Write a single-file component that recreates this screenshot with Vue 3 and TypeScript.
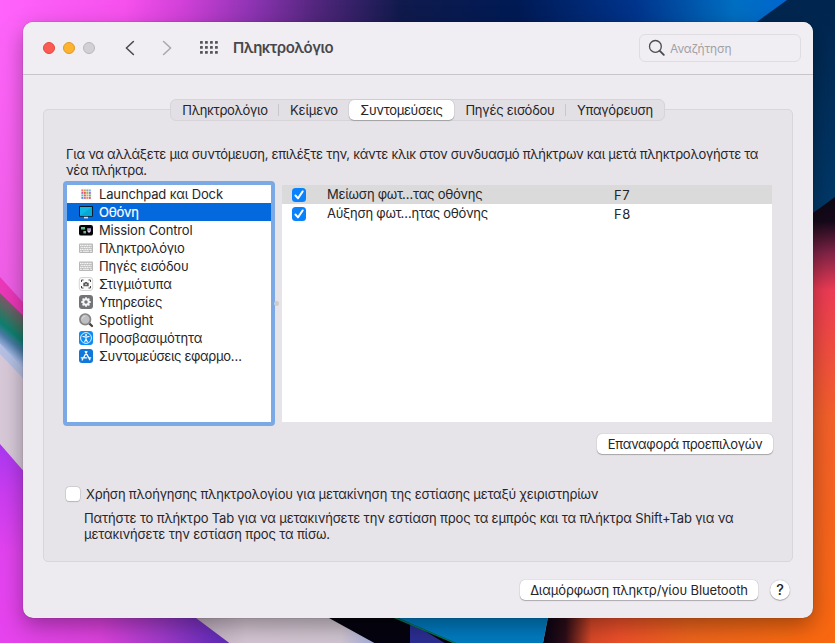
<script setup lang="ts">
import { ref } from 'vue'

interface Tab { label: string; cls: string }
interface Category { label: string; icon: string; cls: string }
interface Shortcut { label: string; key: string; enabled: boolean; cls: string }

const tabs: Tab[] = [
  { label: 'Πληκτρολόγιο', cls: 'tab-keyboard' },
  { label: 'Κείμενο', cls: 'tab-text' },
  { label: 'Συντομεύσεις', cls: 'tab-shortcuts' },
  { label: 'Πηγές εισόδου', cls: 'tab-sources' },
  { label: 'Υπαγόρευση', cls: 'tab-dictation' },
]
const activeTab = ref(2)

const categories: Category[] = [
  { label: 'Launchpad και Dock', icon: 'launchpad', cls: 'k15' },
  { label: 'Οθόνη', icon: 'display', cls: 'k23' },
  { label: 'Mission Control', icon: 'mission', cls: 'k15' },
  { label: 'Πληκτρολόγιο', icon: 'keyboard', cls: 'k30' },
  { label: 'Πηγές εισόδου', icon: 'keyboard', cls: 'k20' },
  { label: 'Στιγμιότυπα', icon: 'screenshot', cls: 'k15' },
  { label: 'Υπηρεσίες', icon: 'gear', cls: 'k23' },
  { label: 'Spotlight', icon: 'spotlight', cls: 'k00' },
  { label: 'Προσβασιμότητα', icon: 'access', cls: 'k17' },
  { label: 'Συντομεύσεις εφαρμο…', icon: 'appstore', cls: 'k35' },
]
const selected = ref(1)

const shortcuts = ref<Shortcut[]>([
  { label: 'Μείωση φωτ…τας οθόνης', key: 'F7', enabled: true, cls: 'k23' },
  { label: 'Αύξηση φωτ…ητας οθόνης', key: 'F8', enabled: true, cls: 'k27' },
])
const fullAccess = ref(false)

const padColors = ['#e8756a', '#e79a4c', '#9b9b9b', '#6fb8e8', '#dd5a9c', '#e0604c', '#8bc34a', '#9c6fd6', '#4fc3c8', '#ef5350', '#f2a33c', '#58b368', '#5c8fe0', '#bd70c8', '#ef8a50', '#e05a6a']
const gearAngles = [0, 45, 90, 135, 180, 225, 270, 315]
</script>

<template>
  <div class="desktop">
    <svg class="wallpaper" viewBox="0 0 835 643" preserveAspectRatio="none" aria-hidden="true">
      <defs>
        <linearGradient id="top" x1="0" x2="1" y1="0" y2="0">
          <stop offset="0" stop-color="#ff63fb" />
          <stop offset=".15" stop-color="#f650ed" />
          <stop offset=".22" stop-color="#d040d8" />
          <stop offset=".3" stop-color="#8f34b4" />
          <stop offset=".38" stop-color="#51267c" />
          <stop offset=".48" stop-color="#101a4c" />
          <stop offset=".62" stop-color="#001a55" />
          <stop offset=".76" stop-color="#00348c" />
          <stop offset=".88" stop-color="#006fc2" />
          <stop offset=".95" stop-color="#0065d0" />
        </linearGradient>
        <linearGradient id="left" x1="0" x2="0" y1="0" y2="643" gradientUnits="userSpaceOnUse">
          <stop offset="0" stop-color="#ff63fb" />
          <stop offset=".45" stop-color="#ef5fe6" />
          <stop offset=".69" stop-color="#a838f0" />
          <stop offset=".76" stop-color="#c83cf0" />
          <stop offset=".86" stop-color="#e243ee" />
          <stop offset="1" stop-color="#e643ee" />
        </linearGradient>
        <linearGradient id="bottom" x1="0" x2="1" y1="0" y2="0">
          <stop offset="0" stop-color="#e643ee" />
          <stop offset=".4" stop-color="#dc41dc" />
          <stop offset=".65" stop-color="#a03aca" />
          <stop offset=".85" stop-color="#6a2dbc" />
          <stop offset="1" stop-color="#5428a8" />
        </linearGradient>
        <linearGradient id="right" x1="0" x2="0" y1="190" y2="643" gradientUnits="userSpaceOnUse">
          <stop offset="0" stop-color="#090812" />
          <stop offset=".07" stop-color="#16091a" />
          <stop offset=".14" stop-color="#822447" />
          <stop offset=".22" stop-color="#ed3b55" />
          <stop offset=".33" stop-color="#f04a43" />
          <stop offset=".5" stop-color="#f3602a" />
          <stop offset="1" stop-color="#f9680f" />
        </linearGradient>
        <linearGradient id="ember" x1="545" x2="835" y1="0" y2="0" gradientUnits="userSpaceOnUse">
          <stop offset="0" stop-color="#090414" />
          <stop offset=".07" stop-color="#2c0d18" />
          <stop offset=".16" stop-color="#d84828" />
          <stop offset=".25" stop-color="#ec4f2a" />
          <stop offset=".5" stop-color="#ee641c" />
          <stop offset="1" stop-color="#fb6b0c" />
        </linearGradient>
        <linearGradient id="navy" x1="0" x2="0" y1="0" y2="1">
          <stop offset="0" stop-color="#00254e" />
          <stop offset="1" stop-color="#003e70" />
        </linearGradient>
        <linearGradient id="silver" x1="0" x2="1" y1="0" y2="0">
          <stop offset="0" stop-color="#b9a7b8" />
          <stop offset=".3" stop-color="#d5c5d3" />
          <stop offset=".8" stop-color="#d0c5d1" />
          <stop offset="1" stop-color="#9aa8db" />
        </linearGradient>
        <linearGradient id="band" x1="0" y1="293" x2="-26" y2="324" gradientUnits="userSpaceOnUse">
          <stop offset="0" stop-color="#85556d" />
          <stop offset=".3" stop-color="#427061" />
          <stop offset=".55" stop-color="#0d806e" />
          <stop offset=".75" stop-color="#4a7ba6" />
          <stop offset="1" stop-color="#a4b9e6" />
        </linearGradient>
      </defs>
      <rect width="835" height="330" fill="url(#top)" />
      <rect width="200" height="620" y="23" fill="url(#left)" />
      <rect y="606" width="250" height="37" fill="url(#bottom)" />
      <path d="M0 277L30 310V340L0 305Z" fill="#ea38b9" />
      <path d="M0 293L40 332V390L0 346Z" fill="url(#band)" />
      <path d="M0 344L40 386V490L0 444Z" fill="#d8c9d9" />
      <path d="M0 344L40 386V396L0 354Z" fill="#b5c0e3" />
      <path d="M188 612L232 645H380L318 612Z" fill="url(#silver)" />
      <path d="M318 612L378 645H470L392 612Z" fill="#05030f" />
      <path d="M410 622L448 645H410Z" fill="#2b2e91" />
      <path d="M384 612L456 643H543L549 612Z" fill="#007bc0" />
      <path d="M384 613L457 644" stroke="#087650" stroke-width="1.500" />
      <path d="M549 612L543 643H835V500H700V612Z" fill="url(#ember)" />
      <rect x="790" y="190" width="45" height="453" fill="url(#right)" />
      <path d="M787 0L740 34V266L835 197V0Z" fill="url(#navy)" />
    </svg>

    <main class="window">
      <header class="toolbar">
        <div class="lights">
          <i class="light red"></i><i class="light amber"></i><i class="light grey"></i>
        </div>
        <svg class="chev" width="12" height="18" viewBox="0 0 12 18"><path d="M9.400 2.500L2.400 9l7 6.500" /></svg>
        <svg class="chev next" width="12" height="18" viewBox="0 0 12 18"><path d="M2.600 2.500L9.600 9l-7 6.500" /></svg>
        <svg class="grid" width="18" height="14" viewBox="0 0 18 14">
          <template v-for="r in 3" :key="r">
            <rect v-for="c in 4" :key="c" :x="(c - 1) * 5" :y="(r - 1) * 5" width="2.8" height="2.8" rx=".6" />
          </template>
        </svg>
        <h1>Πληκτρολόγιο</h1>
        <div class="search">
          <svg width="18" height="18" viewBox="0 0 18 18"><circle cx="7.4" cy="7.4" r="5.9" /><path d="M11.8 11.8l4 4" stroke-width="1.9" /></svg>
          <span>Αναζήτηση</span>
        </div>
      </header>

      <div class="content">
        <nav class="tabs">
          <button v-for="(t, i) in tabs" :key="t.label" :class="['tab', t.cls, { on: i === activeTab }]" @click="activeTab = i">{{ t.label }}</button>
        </nav>

        <section class="panel">
          <p class="intro"><span class="k28">Για να αλλάξετε μια συντόμευση, επιλέξτε την, κάντε κλικ στον συνδυασμό πλήκτρων και μετά πληκτρολογήστε τα</span><br><span class="k28">νέα πλήκτρα.</span></p>

          <div class="split">
            <ul class="cats">
              <li v-for="(c, i) in categories" :key="c.label" :class="{ sel: i === selected }" @click="selected = i">
                <svg width="16" height="16" viewBox="0 0 16 16">
                  <g v-if="c.icon === 'launchpad'">
                    <rect x="2.5" y="2.5" width="11" height="11" rx="2" fill="#f6f4f6" />
                    <rect v-for="(p, n) in padColors" :key="n" :x="3.4 + (n % 4) * 2.5" :y="3.5 + Math.floor(n / 4) * 2.5" width="1.9" height="1.9" :fill="p" />
                  </g>
                  <g v-else-if="c.icon === 'display'">
                    <rect x="6" y="12" width="4" height="2.4" fill="#e5dfd3" />
                    <rect x="1" y="2" width="14" height="10.8" rx=".8" fill="#061b29" />
                    <rect x="2" y="3" width="12" height="8.8" fill="#10b9e3" />
                    <path d="M2 11.8L14 3v8.8z" fill="#08a9d9" />
                  </g>
                  <g v-else-if="c.icon === 'mission'">
                    <rect x="1" y="3" width="14" height="10.6" rx="2.2" fill="#050607" />
                    <path d="M3 5h4v2.5H3z" fill="#5cc78c" /><path d="M5.4 9h2.6v2.4H5.4z" fill="#75b8a2" />
                    <path d="M9.2 6.2h3.8v3.5H9.2z" fill="#a99bc0" /><path d="M10 9h2v1.6h-2z" fill="#ddd" />
                  </g>
                  <g v-else-if="c.icon === 'keyboard'">
                    <rect x="1" y="3.400" width="14" height="9.600" rx="1" fill="#b8b8b8" />
                    <path d="M2 5.300h12M2.600 7.300h11M2 9.300h12" stroke="#f8f8f8" stroke-width="1.200" stroke-dasharray="1.200 .5" />
                    <path d="M2 11.300h2M4.800 11.300h6.400M12 11.300h2" stroke="#f8f8f8" stroke-width="1.100" />
                  </g>
                  <g v-else-if="c.icon === 'screenshot'">
                    <rect x="1.3" y="1.5" width="13.4" height="13" rx="2.6" fill="#fbfbfb" stroke="#cbcbcb" stroke-width=".8" />
                    <path d="M3.500 6V4h2M10.500 4h2v2M12.500 10v2h-2M5.500 12h-2v-2" fill="none" stroke="#333" stroke-width=".9" />
                    <path d="M5.300 6.700h1.300l.5-.8h1.800l.5.8h1.300v3.500H5.300z" fill="#5a5a5a" /><circle cx="8" cy="8.400" r=".9" fill="#ccc" />
                  </g>
                  <g v-else-if="c.icon === 'gear'">
                    <rect x="1" y="1" width="14" height="14" rx="3" fill="#737478" />
                    <rect v-for="a in gearAngles" :key="a" x="7.1" y="3.2" width="1.8" height="2.4" rx=".4" fill="#f5f5f5" :transform="`rotate(${a} 8 8)`" />
                    <circle cx="8" cy="8" r="2.700" fill="none" stroke="#f5f5f5" stroke-width="1.9" />
                  </g>
                  <g v-else-if="c.icon === 'spotlight'">
                    <path d="M11.200 11.400L14 14" stroke="#444" stroke-width="2.300" stroke-linecap="round" />
                    <circle cx="7.200" cy="7.300" r="5.300" fill="#bfbfc1" stroke="#858587" stroke-width="1.700" />
                    <path d="M4.200 6.800a3.200 3.200 0 0 1 3-2.700" fill="none" stroke="#ddd" />
                  </g>
                  <g v-else-if="c.icon === 'access'">
                    <rect x="1" y="1" width="14" height="14" rx="3" fill="#0b8cf6" />
                    <circle cx="8" cy="8" r="5.400" fill="none" stroke="#fff" stroke-width=".9" />
                    <circle cx="8" cy="4.900" r="1" fill="#fff" />
                    <path d="M4.900 6.600l3.100.5 3.100-.5M8 7v2.200M6.700 11.700L8 8.900l1.300 2.800" fill="none" stroke="#fff" stroke-width="1.050" stroke-linecap="round" />
                  </g>
                  <g v-else>
                    <rect x="1" y="1" width="14" height="14" rx="3" fill="#0f78da" />
                    <path d="M8.900 3.700L5.900 9M4.700 11.100l-.5.9M7.300 3.700l4.500 8M3.300 9.800h5.300M10.700 9.800h2" fill="none" stroke="#fff" stroke-width="1.350" stroke-linecap="round" />
                  </g>
                </svg>
                <span :class="c.cls">{{ c.label }}</span>
              </li>
            </ul>
            <div class="divider"><i></i></div>
            <div class="table">
              <div v-for="s in shortcuts" :key="s.key" class="row">
                <button class="check" :class="{ checked: s.enabled }" @click="s.enabled = !s.enabled">
                  <svg v-if="s.enabled" width="14" height="14" viewBox="0 0 14 14"><path d="M3.400 7.500l2.600 2.900 4.700-7" /></svg>
                </button>
                <span class="name" :class="s.cls">{{ s.label }}</span>
                <span class="key">{{ s.key }}</span>
              </div>
            </div>
          </div>

          <div class="actions"><button class="push restore">Επαναφορά προεπιλογών</button></div>

          <div class="option">
            <button class="check" @click="fullAccess = !fullAccess"></button>
            <span class="k21">Χρήση πλοήγησης πληκτρολογίου για μετακίνηση της εστίασης μεταξύ χειριστηρίων</span>
          </div>
          <p class="hint"><span class="k16">Πατήστε το πλήκτρο Tab για να μετακινήσετε την εστίαση προς τα εμπρός και τα πλήκτρα Shift+Tab για να</span><br><span class="k15">μετακινήσετε την εστίαση προς τα πίσω.</span></p>
        </section>

        <footer class="footer">
          <button class="push bluetooth">Διαμόρφωση πληκτρ/γίου Bluetooth</button>
          <button class="help">?</button>
        </footer>
      </div>
    </main>
  </div>
</template>

<style>
body { overflow: hidden; }
</style>

<style scoped>
* { box-sizing: border-box; }
button { font: inherit; color: inherit; letter-spacing: inherit; border: 0; padding: 0; }
.desktop { position: relative; width: 835px; height: 643px; padding: 22px 22px 25px 23px; overflow: hidden; font: 13px/16px Inter, "Liberation Sans", sans-serif; color: #262528; }
.wallpaper { position: absolute; inset: 0; width: 100%; height: 100%; }
.window { position: relative; height: 596px; border-radius: 10px; background: #edebf0; box-shadow: 0 0 1px rgba(0, 0, 0, .5), 0 8px 22px rgba(0, 0, 0, .34); }
.toolbar { display: flex; align-items: center; height: 53px; padding: 0 12px 0 20px; background: #f0eef3; border-bottom: 1px solid #c7c5ca; border-radius: 10px 10px 0 0; }
.lights { display: flex; gap: 8px; margin-right: 29px; }
.light { width: 12px; height: 12px; border-radius: 50%; border: 1px solid; }
.red { background: #fc5b53; border-color: #e0493f; }
.amber { background: #fdb32e; border-color: #e0982a; }
.grey { background: #d2d0d4; border-color: #bab8bd; }
.chev { fill: none; stroke: #4b4a4e; stroke-width: 1.6; stroke-linecap: round; stroke-linejoin: round; margin-right: 25px; }
.chev.next { stroke: #aaa8ad; margin-right: 27px; }
.grid { fill: #555458; margin-right: 15px; }
h1 { margin: 0; font-size: 15px; line-height: 20px; font-weight: 600; letter-spacing: -.52px; color: #48474b; }
.search { display: flex; align-items: center; gap: 4px; width: 162px; height: 28px; margin-left: auto; padding-left: 8px; border: 1px solid #dfdde2; border-radius: 6px; font-size: 12px; letter-spacing: -.2px; color: #a3a1a6; }
.search svg { fill: none; stroke: #4c4b4f; stroke-width: 1.3; stroke-linecap: round; }
.search span { padding-top: 1px; }
.content { padding: 24px 20px 0; display: flex; flex-direction: column; }
.tabs { position: relative; z-index: 1; display: flex; align-self: center; width: 495px; height: 22px; margin: 0 1px -12px 0; background: #e2e0e4; border: 1px solid #d6d4d9; border-radius: 6px; }
.tab { position: relative; height: 20px; padding-bottom: 1px; background: transparent; white-space: nowrap; }
.tab.on { background: #fff; border-radius: 5px; box-shadow: 0 0 1px rgba(0, 0, 0, .35), 0 1px 1px rgba(0, 0, 0, .22); }
.tab-keyboard { width: 108px; letter-spacing: -.34px; }
.tab-text { width: 70px; letter-spacing: -.15px; }
.tab-shortcuts { width: 105px; letter-spacing: -.34px; }
.tab-sources { width: 112px; letter-spacing: -.22px; }
.tab-dictation { width: 98px; letter-spacing: -.3px; }
.tab-keyboard::after, .tab-sources::after { content: ""; position: absolute; right: 0; top: 4px; width: 1px; height: 12px; background: #c9c7cc; }
.panel { height: 453px; padding: 36px 19px 0 22px; border: 1px solid #d8d6da; border-radius: 5px; background: #e6e4e8; white-space: nowrap; }
.intro { margin: 0; height: 35px; }
.split { display: flex; height: 245px; }
.cats { width: 212px; margin: 0 0 0 -3px; padding: 0; border: 4px solid #7ba9e6; border-radius: 4px; background: #fff; list-style: none; }
.cats li { display: flex; align-items: center; gap: 5px; height: 18px; padding-left: 11px; }
.cats li span { margin-top: -1px; }
.cats li.sel { background: #0469dc; color: #fff; -webkit-text-stroke: .2px #fff; }
.cats svg { flex: none; }
.divider { display: flex; align-items: center; width: 7px; }
.divider i { width: 5px; height: 5px; margin-left: -1px; border-radius: 50%; background: #ceccd1; }
.table { width: 490px; margin: 4px 0; background: #fff; }
.row { display: flex; align-items: center; height: 19px; padding-left: 10px; }
.row:first-child { background: #dadadb; }
.name { width: 287px; margin: -2px 0 0 21px; }
.key { letter-spacing: .5px; }
.check { display: flex; flex: none; width: 14px; height: 14px; border-radius: 3.5px; background: #fff; box-shadow: 0 0 0 .5px #bebcc1, 0 .5px 1px rgba(0, 0, 0, .22); }
.check.checked { margin-top: 1px; background: #0a82fb; box-shadow: none; }
.check svg { fill: none; stroke: #fff; stroke-width: 1.9; stroke-linecap: round; stroke-linejoin: round; }
.actions { display: flex; justify-content: flex-end; padding-top: 8px; }
.push { height: 20px; border-radius: 5px; background: #fff; box-shadow: 0 0 1px rgba(0, 0, 0, .35), 0 1px 1px rgba(0, 0, 0, .25); white-space: nowrap; }
.restore { width: 176px; letter-spacing: -.32px; }
.option { display: flex; align-items: center; gap: 6px; margin-top: 32px; height: 16px; }
.hint { margin: 8px 0 0 18px; }
.footer { display: flex; justify-content: flex-end; align-items: center; gap: 12px; height: 20px; margin-top: 18px; padding-right: 3px; }
.bluetooth { width: 238px; padding-bottom: 1px; letter-spacing: -.14px; }
.help { width: 20px; height: 20px; border-radius: 50%; background: #fff; font-size: 14.5px; font-weight: 500; box-shadow: 0 0 1px rgba(0, 0, 0, .35), 0 1px 1px rgba(0, 0, 0, .25); }
.k00 { letter-spacing: 0; }
.k15 { letter-spacing: -.15px; }
.k16 { letter-spacing: -.165px; }
.k17 { letter-spacing: -.17px; }
.k20 { letter-spacing: -.2px; }
.k21 { letter-spacing: -.22px; }
.k23 { letter-spacing: -.24px; }
.k27 { letter-spacing: -.28px; }
.k28 { letter-spacing: -.285px; }
.k30 { letter-spacing: -.32px; }
.k35 { letter-spacing: -.36px; }
</style>
